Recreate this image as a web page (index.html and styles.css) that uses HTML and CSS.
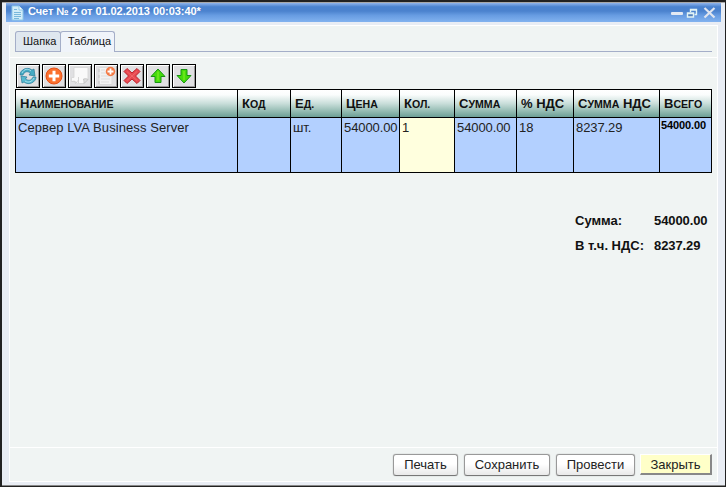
FILE: index.html
```html
<!DOCTYPE html>
<html lang="ru">
<head>
<meta charset="utf-8">
<title>Счет № 2</title>
<link rel="stylesheet" href="styles.css">
</head>
<body>
<div class="window">
  <header class="titlebar">
    <svg class="doc" width="14" height="16" viewBox="0 0 14 16"><path d="M1 1h7l4 4v10H1z" fill="#d2edf8" stroke="#8dc7e8"/><path d="M8 1v4h4" fill="#f5fcff" stroke="#8dc7e8"/><path d="M3 4.5h3M3 7.5h7M3 9.5h7M3 11.5h7M3 13.5h5" stroke="#78b8dc"/></svg>
    <h1>Счет № 2 от 01.02.2013 00:03:40*</h1>
    <svg class="controls" width="46" height="14" viewBox="0 0 46 14"><rect x="1" y="6" width="12" height="3" rx="1" fill="#e3e9f3"/><path d="M20.500 6V3.500h6v5h-2M20 4h7" fill="none" stroke="#e1f3f5" stroke-width="1.400"/><path d="M17.500 7h6v4h-6zM17 7.500h7" fill="#5482bd" stroke="#e1f3f5" stroke-width="1.400"/><path d="M34.500 2l10 9.500M44.500 2l-10 9.500" stroke="#e0e5ef" stroke-width="2.200"/></svg>
  </header>
  <main class="panel">
    <nav class="tabs"><span class="tab">Шапка</span><span class="tab active">Таблица</span></nav>
    <section class="content">
      <div class="toolbar">
        <button class="tool" aria-label="Обновить"><svg viewBox="0 0 20 20"><path d="M2 9c0-5 7-9 12-5l2-1 1 7-6-1 1.500-2C9 4.500 6 6 5 9z" fill="#45abc4" stroke="#287b9a" stroke-width=".7"/><path d="M18 11c0 5-7 9-12 5l-2 1-1-7 6 1-1.500 2c3.500 2.500 6.500 1 7.500-2z" fill="#56bad0" stroke="#287b9a" stroke-width=".7"/><path d="M4 7c2-4 6-5 9-2M7 15c3 2 7 1 9-3" fill="none" stroke="#a5dfeb"/></svg></button>
        <button class="tool" aria-label="Добавить"><svg viewBox="0 0 20 20"><circle cx="10" cy="10" r="8" fill="#fb702d" stroke="#e75017"/><path d="M10 4.800v10.400M4.800 10h10.400" stroke="#fff" stroke-width="3"/></svg></button>
        <button class="tool" aria-label="Копировать"><svg viewBox="0 0 20 20"><path d="M4 1.500h14v12l-4 4H8l-3-2H1.500v-4H4z" fill="#f9f9f9" stroke="#d4d4d4" stroke-width=".8"/><path d="M8.500 11v6M1.500 15.500l3-.5 1 2.500 3-3.500" fill="none" stroke="#ccc" stroke-width=".8"/><path d="M18 13.500c-1.500-1-3-.8-4.500-.5.500 2 .5 3 .5 4.500z" fill="#dedede" stroke="#bbb" stroke-width=".8"/></svg></button>
        <button class="tool" aria-label="Вставить строку"><svg viewBox="0 0 20 20"><path d="M3 1.500h13v17H3z" fill="#f2f2f2" stroke="#dadada"/><path d="M5 4h4M5 7h5M5 10h9M5 13h9M5 16h8" stroke="#ddd"/><path d="M3 3v3M3 9v3M3 15v3" stroke="#c4c4c4"/><circle cx="14.500" cy="5.500" r="4.700" fill="#f47a45"/><path d="M14.500 2.500v6M11.500 5.500h6" stroke="#fff" stroke-width="1.800"/></svg></button>
        <button class="tool" aria-label="Удалить"><svg viewBox="0 0 20 20"><path d="M5 2.500l5 4.500 5-4.500L18 5.500 13.500 10l4.500 4.500-3 3-5-4.500-5 4.500-3-3L6.500 10 2 5.500z" fill="#e84950" stroke="#bd202b"/><path d="M5 5.500l10 9M15 5.500l-10 9" stroke="#f0666a"/></svg></button>
        <button class="tool" aria-label="Вверх"><svg viewBox="0 0 20 20"><path d="M10 3l7 7.500h-4v6H7v-6H3z" fill="#45dc0b" stroke="#189313"/><path d="M10 5.500v9" stroke="#8bf029"/></svg></button>
        <button class="tool" aria-label="Вниз"><svg viewBox="0 0 20 20"><path d="M10 17L3 9.500h4v-6h6v6h4z" fill="#45dc0b" stroke="#189313"/><path d="M10 5v9" stroke="#8bf029"/></svg></button>
      </div>
      <table>
        <colgroup><col class="c-name"><col class="c-code"><col class="c-unit"><col class="c-price"><col class="c-qty"><col class="c-sum"><col class="c-rate"><col class="c-vat"><col class="c-total"></colgroup>
        <thead><tr><th>Н<span>аименование</span></th><th>К<span>од</span></th><th>Е<span>д.</span></th><th>Ц<span>ена</span></th><th>К<span>ол.</span></th><th>С<span>умма</span></th><th>% НДС</th><th>С<span>умма</span> НДС</th><th>В<span>сего</span></th></tr></thead>
        <tbody><tr><td class="name">Сервер LVA Business Server</td><td></td><td>шт.</td><td>54000.00</td><td class="edit">1</td><td>54000.00</td><td>18</td><td>8237.29</td><td class="total">54000.00</td></tr></tbody>
      </table>
      <dl class="summary"><dt>Сумма:</dt><dd>54000.00</dd><dt>В т.ч. НДС:</dt><dd>8237.29</dd></dl>
    </section>
    <footer class="actions"><button class="btn print">Печать</button><button class="btn save">Сохранить</button><button class="btn post">Провести</button><button class="close">Закрыть</button></footer>
  </main>
</div>
</body>
</html>
```
FILE: styles.css
```css
* { box-sizing: border-box; }
body { margin: 0; width: 726px; height: 487px; overflow: hidden; background: #222; font-family: "Liberation Sans", Arial, sans-serif; color: #222; }
button { font-family: inherit; margin: 0; }
.window { height: 487px; padding: 1px 4px 3px; border: solid #222; border-width: 2px 1px 1px 2px; background: #e9edf4; box-shadow: inset 0 1px #a8a8a8, inset 0 -1px #888; }
.titlebar { display: flex; align-items: center; height: 19px; width: 715px; padding: 0 2px 0 5px; background: linear-gradient(#8fb4ec 0, #4b83cf 20%, #4b82ce 42%, #679ce2 65%, #82b2ef 100%); }
.doc { flex: none; }
h1 { flex: 1; margin: -3px 0 0 3px; color: #fff; font-size: 11px; line-height: 16px; letter-spacing: -.05px; white-space: nowrap; }
.controls { flex: none; margin-top: 1px; margin-right: 3px; }
.panel { display: flex; flex-direction: column; width: 709px; height: 457px; margin: 3px 0 0 3px; border: 1px solid #fff; background: #f0f4f3; }
.tabs { display: flex; align-items: flex-start; height: 21px; margin: 5px 5px 0; border-bottom: 1px solid #a4aec8; }
.tab { width: 46px; height: 20px; padding: 0 0 0 7px; border: 1px solid #a4aec8; border-bottom: 0; border-radius: 3px 3px 0 0; background: #dfe7ef; color: #111; font-size: 11px; line-height: 19px; white-space: nowrap; }
.active { width: 55px; height: 21px; margin-left: -1px; background: #f0f4fa; }
.content { flex: 1; margin-top: 5px; padding: 6px 5px 0; border-top: 1px solid #fff; }
.toolbar { display: flex; gap: 2px; padding-left: 1px; height: 24px; }
.tool { width: 24px; height: 24px; padding: 0; border: 1px solid #000; background: #e0e0e2; box-shadow: inset 1px 1px #fff, inset -1px -1px #999; }
.tool svg { display: block; width: 20px; height: 20px; margin: 1px; }
table { width: 697px; margin-top: 1px; border-collapse: separate; border-spacing: 0; table-layout: fixed; border: solid #000; border-width: 1px 1px 0 0; }
.c-name { width: 222px; }
.c-code { width: 53px; }
.c-unit { width: 51px; }
.c-price { width: 58px; }
.c-qty { width: 55px; }
.c-sum { width: 62px; }
.c-rate { width: 57px; }
.c-vat { width: 86px; }
.c-total { width: 52px; }
th, td { padding: 0; border: solid #000; border-width: 0 0 1px 1px; text-align: left; white-space: nowrap; }
th { height: 28px; padding-left: 4px; background: linear-gradient(#fff 0, #fafcfc 18%, #c9deda 50%, #91b9b0 80%, #6d9f96 100%); color: #111; font-size: 13px; line-height: 27px; }
th span { font-size: 10.6px; line-height: 1; text-transform: uppercase; }
td { height: 55px; padding: 2px 0 0 2px; vertical-align: top; background: #b3d0ff; font-size: 13px; line-height: 16px; letter-spacing: -.1px; }
.name { letter-spacing: .08px; }
.edit { background: #ffffde; }
.total { padding: 0 0 0 1px; color: #000; font-size: 11px; font-weight: bold; line-height: 14px; }
.summary { display: grid; grid-template-columns: 79px 58px; row-gap: 9px; margin: 40px 0 0 560px; color: #111; font-size: 13px; line-height: 16px; font-weight: bold; white-space: nowrap; }
dd { margin: 0; letter-spacing: -.1px; }
.actions { display: flex; height: 34px; padding: 6px 5px 0 0; justify-content: flex-end; gap: 6px; border-top: 1px solid #fff; }
.btn, .close { height: 22px; padding: 0; font-size: 13px; line-height: 18px; color: #222; }
.btn { border: 1px solid #999; border-bottom-color: #777; border-radius: 3px; background: linear-gradient(#fff 0, #fff 45%, #e9e9e9 100%); box-shadow: 0 0 1px #888; }
.print { width: 65px; }
.save { width: 86px; }
.post { width: 79px; }
.close { width: 72px; height: 21px; margin-left: -1px; padding-top: 1px; border: solid #888; border-width: 1px 2px 2px 1px; border-top-color: #fff; border-left-color: #fff; background: #ffffc8; }
```
